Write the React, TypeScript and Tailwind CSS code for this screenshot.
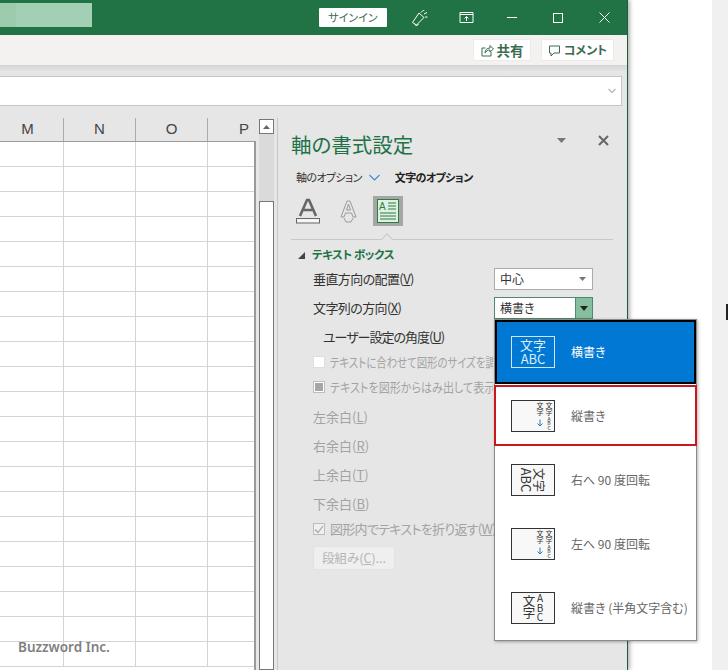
import React from "react";

const font = { fontFamily: '"Noto Sans CJK JP", "Noto Sans", sans-serif' };
const rows = Array.from({ length: 21 });

function Head({ w, t, className = "" }: { w: string; t: string; className?: string }) {
  return (
    <div className={`${w} h-full flex items-center text-[15px] text-[#444] ${className}`} style={{ fontFamily: '"Liberation Sans", sans-serif' }}>
      {t}
    </div>
  );
}

function Label({ children, className = "" }: { children: React.ReactNode; className?: string }) {
  return <div className={`whitespace-nowrap text-[13px] leading-[18px] ${className}`}>{children}</div>;
}

function Select({ text, active = false }: { text: string; active?: boolean }) {
  return (
    <div className={`w-[99px] h-[22px] flex items-center bg-white border ${active ? "border-[#4f8a6a]" : "border-[#ababab]"}`}>
      <span className="pl-[5px] text-[12px] text-[#333] flex-1">{text}</span>
      {active ? (
        <span className="w-[17px] h-full bg-[#86bfa0] border-l border-[#4f8a6a] flex items-center justify-center">
          <svg width="8" height="5" viewBox="0 0 8 5"><path d="M0 0h8L4 5z" fill="#222" /></svg>
        </span>
      ) : (
        <span className="w-[17px] h-full flex items-center justify-center pr-[3px]">
          <svg width="7" height="4" viewBox="0 0 7 4"><path d="M0 0h7L3.5 4z" fill="#777" /></svg>
        </span>
      )}
    </div>
  );
}

function FieldIcon({ children, dark = false }: { children: React.ReactNode; dark?: boolean }) {
  return (
    <svg width="44" height="32" viewBox="0 0 44 32" className="shrink-0" style={font}>
      <rect x="0.5" y="0.5" width="43" height="31" fill={dark ? "none" : "#f8f8f8"} stroke={dark ? "#cfe4f7" : "#333"} />
      {children}
    </svg>
  );
}

function VerticalIcon() {
  return (
    <FieldIcon>
      <text x="38" y="8" fontSize="7" textAnchor="middle" fill="#333">文</text>
      <text x="38" y="15" fontSize="7" textAnchor="middle" fill="#333">字</text>
      <text x="38" y="20.5" fontSize="5" textAnchor="middle" fill="#333">A</text>
      <text x="38" y="25" fontSize="5" textAnchor="middle" fill="#333">B</text>
      <text x="38" y="29.5" fontSize="5" textAnchor="middle" fill="#333">C</text>
      <text x="29" y="8" fontSize="7" textAnchor="middle" fill="#333">文</text>
      <text x="29" y="15" fontSize="7" textAnchor="middle" fill="#333">字</text>
      <path d="M29 19.5v6.5M26.5 23.5L29 26l2.5-2.5" stroke="#2a7fb8" strokeWidth="1" fill="none" />
    </FieldIcon>
  );
}

function MenuItem({ icon, text, className = "" }: { icon: React.ReactNode; text: string; className?: string }) {
  return (
    <div className={`flex items-center gap-[16px] whitespace-nowrap text-[12px] text-[#666] ${className}`}>
      {icon}
      <span>{text}</span>
    </div>
  );
}

export default function App() {
  return (
    <div className="relative w-[728px] h-[670px] flex overflow-hidden bg-white text-[#333] [font-feature-settings:'palt']" style={font}>
      {/* Excel window */}
      <div className="w-[628px] h-full flex flex-col shrink-0 bg-[#e6e6e6] border-r border-[#1f5c3a] shadow-[2px_0_4px_rgba(0,0,0,0.3)] z-10">
        {/* Title bar */}
        <div className="h-[35px] shrink-0 bg-[#217346] flex items-center">
          <div className="w-[92px] h-[24px] -mt-[5px] bg-[#a3d0b5] flex">
            <div className="w-[16px] h-full bg-[#9ccbae]" />
          </div>
          <div className="ml-[227px] -mt-[1px] w-[68px] h-[19px] bg-white rounded-[1px] flex items-center justify-center text-[11px] text-[#3d6b52]">サインイン</div>
          <svg className="ml-[24px]" width="18" height="18" viewBox="0 0 18 18" fill="none" stroke="#fff" strokeWidth="1">
            <path d="M1.5 13.5L8 4l5 4.5-7.5 7.5zM4 15.5l1.5 1.5 2-2M10 3.5l2-2M13 5l3-1.5M14 8h2.5M12.5 1l.5 1" />
          </svg>
          <svg className="ml-[30px]" width="15" height="13" viewBox="0 0 15 13" fill="none" stroke="#fff" strokeWidth="1">
            <path d="M1 1.5h13v10H1zM1 3.5h13M7.5 10V5.5M5.5 7.5l2-2 2 2" />
          </svg>
          <div className="ml-[33px] w-[10px] h-px bg-white" />
          <div className="ml-[36px] w-[10px] h-[10px] border border-white" />
          <svg className="ml-[36px]" width="11" height="11" viewBox="0 0 11 11" stroke="#fff" strokeWidth="1"><path d="M0.5 0.5l10 10M10.5 0.5l-10 10" /></svg>
        </div>
        {/* Ribbon strip */}
        <div className="h-[30px] shrink-0 bg-[#f3f2f1] flex items-center justify-end pr-[13px] gap-[10px]">
          <div className="w-[58px] h-[22px] bg-white rounded-[2px] border border-[#ebebeb] flex items-center justify-center gap-[3px] text-[13.5px] font-bold text-[#3d6b52]">
            <svg width="13" height="13" viewBox="0 0 13 13" fill="none" stroke="#3d6b52"><path d="M4.5 4H1v8h9V8M4 9c0-3 2-5 5-5V1.5L12.5 5 9 8V6C7 6 5 7 4 9z" /></svg>
            <span>共有</span>
          </div>
          <div className="w-[73px] h-[22px] bg-white rounded-[2px] border border-[#ebebeb] flex items-center justify-center gap-[3px] text-[12px] font-bold text-[#3d6b52]">
            <svg width="13" height="13" viewBox="0 0 13 13" fill="none" stroke="#3d6b52"><path d="M1.5 2h10v7H6l-3 3V9H1.5z" /></svg>
            <span>コメント</span>
          </div>
        </div>
        <div className="h-[11px] shrink-0 bg-gradient-to-b from-[#d4d4d4] to-[#e6e6e6] to-60%" />
        {/* Formula bar */}
        <div className="h-[30px] w-[622px] shrink-0 bg-white border border-l-0 border-[#c6c6c6] flex items-center justify-end pr-[5px]">
          <svg width="8" height="6" viewBox="0 0 8 6" fill="none" stroke="#bbb" strokeWidth="1.5"><path d="M.5 1L4 4.5 7.5 1" /></svg>
        </div>
        {/* Sheet + pane */}
        <div className="flex-1 min-h-0 flex pt-[12px]">
          {/* Sheet */}
          <div className="w-[256px] shrink-0 flex flex-col">
            <div className="h-[23px] shrink-0 flex">
              <Head w="w-[64px]" t="M" className="justify-center pr-[8px] border-r border-[#ababab]" />
              <Head w="w-[72px]" t="N" className="justify-center border-r border-[#ababab]" />
              <Head w="w-[72px]" t="O" className="justify-center border-r border-[#ababab]" />
              <Head w="w-[48px]" t="P" className="justify-end pr-[7px]" />
            </div>
            <div className="flex-1 min-h-0 bg-white border-t border-r-2 border-[#9a9a9a] overflow-hidden">
              {rows.map((_, i) => (
                <div key={i} className="h-[25px] flex border-b border-[#d4d4d4]">
                  <div className="w-[64px] border-r border-[#d4d4d4]" />
                  <div className="w-[72px] border-r border-[#d4d4d4]" />
                  <div className="w-[72px] border-r border-[#d4d4d4]" />
                </div>
              ))}
            </div>
          </div>
          {/* Scroll bar */}
          <div className="ml-[3px] w-[15px] shrink-0 flex flex-col bg-[#dadada] mt-[1px]">
            <div className="h-[15px] shrink-0 bg-white border border-[#777] flex items-center justify-center">
              <svg width="7" height="4" viewBox="0 0 7 4"><path d="M3.5 0L7 4H0z" fill="#666" /></svg>
            </div>
            <div className="h-[67px] shrink-0" />
            <div className="flex-1 bg-white border border-[#777]" />
          </div>
          {/* Pane */}
          <div className="ml-[3px] flex-1 min-w-0 border-l border-[#c8c8c8] pl-[13px] flex flex-col overflow-hidden">
            <div className="h-[27px] mt-[13px] flex items-center justify-between pr-[18px] shrink-0">
              <span className="text-[20.5px] leading-none text-[#217346] whitespace-nowrap">軸の書式設定</span>
              <span className="flex items-center gap-[32px] -mt-[8px]">
                <svg width="9" height="5" viewBox="0 0 9 5"><path d="M0 0h9L4.5 5z" fill="#777" /></svg>
                <svg width="11" height="11" viewBox="0 0 11 11" stroke="#666" strokeWidth="2"><path d="M1 1l9 9M10 1l-9 9" /></svg>
              </span>
            </div>
            <div className="mt-[10px] h-[18px] pl-[5px] flex items-center text-[11px] tracking-[-0.6px] shrink-0 whitespace-nowrap">
              <span className="text-[#333]">軸のオプション</span>
              <svg className="ml-[7px]" width="11" height="7" viewBox="0 0 11 7" fill="none" stroke="#3f8fd0" strokeWidth="1.2"><path d="M.5 1L5.5 6l5-5" /></svg>
              <span className="ml-[15px] font-bold text-[#222]">文字のオプション</span>
            </div>
            <div className="mt-[10px] h-[30px] pl-[5px] flex items-center shrink-0">
              <svg width="24" height="26" viewBox="0 0 24 26">
                <path d="M4 18L11 2h2l7 16M7 12h10" fill="none" stroke="#666" strokeWidth="2.6" />
                <rect x="0.5" y="20.5" width="23" height="4.5" fill="#f4f4f4" stroke="#666" />
              </svg>
              <svg className="ml-[20px]" width="17" height="25" viewBox="0 0 17 25" fill="none" stroke="#9a9a9a">
                <path d="M1 18L7 2h3l6 16h-3l-1.5-4h-6L4 18zM6.5 11h4L8.5 5z" />
                <path d="M4 19l2 4h5l2-4" />
              </svg>
              <div className="ml-[16px] w-[30px] h-[30px] bg-[#a6a6a6] flex items-center justify-center">
                <svg width="22" height="24" viewBox="0 0 22 24">
                  <rect x="0.5" y="0.5" width="21" height="23" fill="#dff0e2" stroke="#2e7d40" />
                  <text x="2" y="11" fontSize="10" fill="#2e7d40" style={{ fontFamily: '"Liberation Sans", sans-serif' }}>A</text>
                  <path d="M11 4h8M11 7h8M11 10h8M3 14h16M3 17h16M3 20h16" stroke="#2e7d40" strokeWidth="1" />
                </svg>
              </div>
            </div>
            <div className="relative mt-[13px] w-[322px] h-px bg-[#c8c8c8] shrink-0">
              <div className="absolute left-[92px] -top-[4px] w-[8px] h-[8px] rotate-45 bg-[#e6e6e6] border-l border-t border-[#c8c8c8]" />
            </div>
            <div className="mt-[6px] h-[18px] pl-[7px] flex items-center shrink-0 whitespace-nowrap">
              <svg width="7" height="7" viewBox="0 0 7 7"><path d="M7 0v7H0z" fill="#444" /></svg>
              <span className="ml-[7px] text-[11.5px] tracking-[-0.4px] font-bold text-[#217346]">テキスト ボックス</span>
            </div>
            {/* Form */}
            <div className="pl-[22px] flex flex-col shrink-0">
              <div className="mt-[4px] h-[22px] flex items-center">
                <Label className="w-[181px] tracking-[-0.6px]">垂直方向の配置(<u>V</u>)</Label>
                <Select text="中心" />
              </div>
              <div className="mt-[7px] h-[22px] flex items-center">
                <Label className="w-[181px] tracking-[-0.6px]">文字列の方向(<u>X</u>)</Label>
                <Select text="横書き" active />
              </div>
              <Label className="mt-[9px] pl-[10px] tracking-[-1px]">ユーザー設定の角度(<u>U</u>)</Label>
              <div className="mt-[8px] h-[16px] flex items-center gap-[5px] text-[#a3a3a3]">
                <div className="w-[12px] h-[12px] bg-white border border-[#dedede] shrink-0" />
                <Label className="w-[163px] overflow-hidden">
                  <span className="inline-block origin-left scale-x-[0.8]">テキストに合わせて図形のサイズを調</span>
                </Label>
              </div>
              <div className="mt-[9px] h-[16px] flex items-center gap-[5px] text-[#a3a3a3]">
                <div className="w-[12px] h-[12px] bg-white border border-[#bdbdbd] shrink-0 flex items-center justify-center">
                  <div className="w-[8px] h-[8px] bg-[#a6a6a6]" />
                </div>
                <Label className="w-[163px] overflow-hidden">
                  <span className="inline-block origin-left scale-x-[0.85]">テキストを図形からはみ出して表示</span>
                </Label>
              </div>
              <Label className="mt-[13px] text-[#a3a3a3]">左余白(<u>L</u>)</Label>
              <Label className="mt-[11px] text-[#a3a3a3]">右余白(<u>R</u>)</Label>
              <Label className="mt-[11px] text-[#a3a3a3]">上余白(<u>T</u>)</Label>
              <Label className="mt-[11px] text-[#a3a3a3]">下余白(<u>B</u>)</Label>
              <div className="mt-[8px] h-[16px] flex items-center gap-[5px] text-[#a3a3a3]">
                <div className="w-[12px] h-[12px] bg-[#efefef] border border-[#bdbdbd] shrink-0 flex items-center justify-center">
                  <svg width="10" height="9" viewBox="0 0 10 9" fill="none" stroke="#a6a6a6" strokeWidth="1.2"><path d="M1 4.5l3 3 5-6.5" /></svg>
                </div>
                <Label className="tracking-[-0.7px]">図形内でテキストを折り返す(<u>W</u>)</Label>
              </div>
              <div className="mt-[9px] w-[82px] h-[24px] bg-[#efefef] border border-[#e2e2e2] flex items-center justify-center text-[12.5px] text-[#b5b5b5] whitespace-nowrap">
                段組み(<u>C</u>)...
              </div>
            </div>
          </div>
        </div>
      </div>
      {/* Right of window */}
      <div className="flex-1 flex justify-end">
        <div className="w-[16px] h-full bg-[#f0f0f0] relative">
          <div className="absolute right-0 top-[304px] w-[2px] h-[16px] bg-[#222]" />
        </div>
      </div>
      {/* Dropdown menu */}
      <div className="absolute z-20 left-[494px] top-[319px] w-[203px] h-[322px] bg-white border border-[#8a8a8a] shadow-[1px_1px_3px_rgba(0,0,0,0.3)] flex flex-col">
        <MenuItem
          className="h-[64px] pl-[14px] bg-[#0078d4] border-2 border-black !text-white"
          icon={
            <FieldIcon dark>
              <text x="22" y="14" fontSize="13" textAnchor="middle" fill="#dcecf9">文字</text>
              <text x="22" y="28" fontSize="13" textAnchor="middle" fill="#dcecf9">ABC</text>
            </FieldIcon>
          }
          text="横書き"
        />
        <MenuItem className="h-[61px] mt-[1px] pl-[15px] border-2 border-[#c8171d] -mx-px" icon={<VerticalIcon />} text="縦書き" />
        <MenuItem
          className="h-[64px] mt-[2px] pl-[16px]"
          icon={
            <FieldIcon>
              <g transform="translate(22 16) rotate(90)">
                <text x="0" y="-1" fontSize="12" textAnchor="middle" fill="#333">文字</text>
                <text x="0" y="12" fontSize="13" textAnchor="middle" fill="#333">ABC</text>
              </g>
            </FieldIcon>
          }
          text="右へ 90 度回転"
        />
        <MenuItem className="h-[64px] pl-[16px]" icon={<VerticalIcon />} text="左へ 90 度回転" />
        <MenuItem
          className="h-[64px] pl-[16px]"
          icon={
            <FieldIcon>
              <text x="18" y="14" fontSize="12.5" textAnchor="middle" fill="#333">文</text>
              <text x="18" y="26" fontSize="12.5" textAnchor="middle" fill="#333">字</text>
              <text x="29" y="10" fontSize="10" textAnchor="middle" fill="#333">A</text>
              <text x="29" y="19.5" fontSize="10" textAnchor="middle" fill="#333">B</text>
              <text x="29" y="29" fontSize="10" textAnchor="middle" fill="#333">C</text>
            </FieldIcon>
          }
          text="縦書き (半角文字含む)"
        />
      </div>
      {/* Watermark */}
      <div className="absolute z-20 left-[18px] top-[637px] text-[13.5px] font-semibold text-[#808080]" style={{ fontFamily: '"Noto Sans", sans-serif' }}>
        Buzzword Inc.
      </div>
    </div>
  );
}
